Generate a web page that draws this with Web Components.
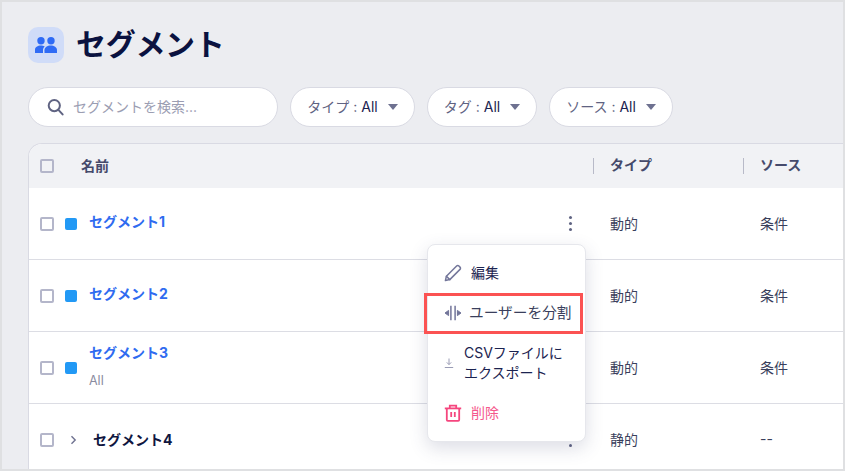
<!DOCTYPE html>
<html lang="ja">
<head>
<meta charset="utf-8">
<title>セグメント</title>
<style>
  html, body { margin: 0; height: 100%; }
  body {
    width: 845px;
    height: 471px;
    overflow: hidden;
    font-family: Inter, "Noto Sans CJK JP", sans-serif;
  }
</style>
</head>
<body>
<segment-page>
  <page-title slot="title">セグメント</page-title>
  <search-box slot="tools" placeholder="セグメントを検索..."></search-box>
  <filter-pill slot="tools" label="タイプ" value="All" style="width:125px"></filter-pill>
  <filter-pill slot="tools" label="タグ" value="All" style="width:110px"></filter-pill>
  <filter-pill slot="tools" label="ソース" value="All" style="width:124px"></filter-pill>
  <segment-table slot="table">
    <segment-row name="セグメント1" type="動的" source="条件"></segment-row>
    <segment-row name="セグメント2" type="動的" source="条件"></segment-row>
    <segment-row name="セグメント3" sub="All" type="動的" source="条件"></segment-row>
    <segment-row name="セグメント4" type="静的" source="--" folder></segment-row>
  </segment-table>
  <action-menu slot="menu">
    <menu-row icon="edit" gap="9">編集</menu-row>
    <menu-row icon="split" gap="7" highlight>ユーザーを分割</menu-row>
    <menu-row icon="download" gap="10" tall>CSVファイルに<br>エクスポート</menu-row>
    <menu-row icon="trash" gap="9" danger>削除</menu-row>
  </action-menu>
</segment-page>

<script>
const ICONS = {
  edit: `<svg width="18" height="18" viewBox="0 0 18 18" fill="none" stroke="#73769a" stroke-width="1.5" stroke-linejoin="round" stroke-linecap="round"><path d="M1.4 16.6l1-4.4L12.6 2a1.6 1.6 0 0 1 2.3 0l1.1 1.1a1.6 1.6 0 0 1 0 2.3L5.8 15.6z"/><path d="M2.4 12.2l3.4 3.4"/></svg>`,
  split: `<svg width="18" height="18" viewBox="0 0 18 18" fill="none" stroke="#73769a" stroke-width="1.5"><path d="M6.9 1.8v14.4M11.1 1.8v14.4"/><path d="M4.800 9H2M13.200 9H16"/><path d="M4.600 6.400L1 9l3.600 2.600zM13.400 6.400L17 9l-3.600 2.600z" fill="#73769a" stroke-width="1" stroke-linejoin="round"/></svg>`,
  download: `<svg width="10" height="12" viewBox="0 0 10 12" fill="none" stroke="#9a9cb5" stroke-width="1"><path d="M5 1.500v6M2.800 5.400L5 7.600l2.200-2.200"/><path d="M.8 10.500h8.400"/></svg>`,
  trash: `<svg width="18" height="18" viewBox="0 0 18 18" fill="none" stroke="#f5467e" stroke-width="1.8"><path d="M.8 4.400h16.400"/><path d="M5.800 4.200V1.700h6.400v2.500"/><path d="M2.800 4.400v11.400c0 .6.4 1 1 1h10.400c.6 0 1-.4 1-1V4.400"/><path d="M7.200 8v5M10.800 8v5"/></svg>`
};

class SegmentPage extends HTMLElement {
  constructor() {
    super();
    this.attachShadow({ mode: 'open' });
    this.shadowRoot.innerHTML = `
      <style>
        :host {
          display: block;
          position: relative;
          box-sizing: border-box;
          width: 845px;
          height: 471px;
          border: 2px solid #dfe0e2;
          background: #ecedf1;
          overflow: hidden;
        }
        .inner {
          display: flex;
          flex-direction: column;
          padding: 25px 0 0 26px;
        }
        .tools {
          display: flex;
          gap: 12px;
          margin-top: 24px;
        }
        .table { margin-top: 16px; }
      </style>
      <div class="inner">
        <slot name="title"></slot>
        <div class="tools"><slot name="tools"></slot></div>
        <div class="table"><slot name="table"></slot></div>
      </div>
      <slot name="menu"></slot>
    `;
  }
}

class PageTitle extends HTMLElement {
  constructor() {
    super();
    this.attachShadow({ mode: 'open' });
    this.shadowRoot.innerHTML = `
      <style>
        :host { display: flex; align-items: center; gap: 12px; height: 36px; }
        .icon {
          width: 36px;
          height: 36px;
          border-radius: 10px;
          background: #d0dcf8;
          display: flex;
          align-items: center;
          justify-content: center;
        }
        h1 {
          margin: -2px 0 0;
          font-size: 30px;
          line-height: 36px;
          letter-spacing: -0.3px;
          font-weight: 700;
          color: #0a1240;
        }
      </style>
      <div class="icon">
        <svg width="22" height="16" viewBox="0 0 22 16" fill="#2f6bf5">
          <circle cx="6" cy="3.7" r="3.7"/>
          <circle cx="16" cy="3.7" r="3.7"/>
          <path d="M0 16v-3.200C0 10.200 2.600 8.600 5.800 8.600c1.500 0 2.900.3 3.900 1-1.100 1-1.700 2.200-1.700 3.600V16z"/>
          <path d="M9.500 16v-2.800c0-2.800 2.800-4.600 6.200-4.600S22 10.400 22 13.200V16z"/>
        </svg>
      </div>
      <h1><slot></slot></h1>
    `;
  }
}

class SearchBox extends HTMLElement {
  constructor() {
    super();
    this.attachShadow({ mode: 'open' });
  }
  connectedCallback() {
    const placeholder = this.getAttribute('placeholder') || '';
    this.shadowRoot.innerHTML = `
      <style>
        :host {
          display: flex;
          align-items: center;
          box-sizing: border-box;
          width: 250px;
          height: 40px;
          padding-left: 18px;
          gap: 9px;
          background: #fff;
          border: 1px solid #d9dae3;
          border-radius: 20px;
        }
        span { font-size: 14px; color: #9b9db2; margin-top: -2px; }
        svg { flex: none; }
      </style>
      <svg width="17" height="18" viewBox="0 0 17 18" fill="none" stroke="#5f6382" stroke-width="2">
        <circle cx="7.3" cy="7.6" r="5.6"/>
        <path d="M11.4 11.8l4.2 4.6" stroke-linecap="round"/>
      </svg>
      <span>${placeholder}</span>
    `;
  }
}

class FilterPill extends HTMLElement {
  constructor() {
    super();
    this.attachShadow({ mode: 'open' });
  }
  connectedCallback() {
    this.shadowRoot.innerHTML = `
      <style>
        :host {
          display: flex;
          align-items: center;
          justify-content: center;
          box-sizing: border-box;
          height: 40px;
          gap: 10px;
          background: #fff;
          border: 1px solid #d9dae3;
          border-radius: 20px;
          font-size: 14px;
          white-space: nowrap;
        }
        .text { margin-top: -2px; }
        .label { color: #5f6382; }
        .value { color: #1b2350; }
        .arrow {
          width: 0;
          height: 0;
          border-left: 5px solid transparent;
          border-right: 5px solid transparent;
          border-top: 6px solid #6e7190;
        }
      </style>
      <span class="text"><span class="label">${this.getAttribute('label')} :</span> <span class="value">${this.getAttribute('value')}</span></span>
      <span class="arrow"></span>
    `;
  }
}

class SegmentTable extends HTMLElement {
  constructor() {
    super();
    this.attachShadow({ mode: 'open' });
    this.shadowRoot.innerHTML = `
      <style>
        :host {
          display: block;
          width: 860px;
          background: #fff;
          border: 1px solid #d9dae3;
          border-bottom: 0;
          border-radius: 14px 0 0 0;
          overflow: hidden;
        }
        .head {
          display: grid;
          grid-template-columns: 564px 150px 1fr;
          align-items: center;
          height: 44px;
          background: #f1f2f5;
          font-size: 14px;
          font-weight: 700;
          color: #454a6b;
        }
        .name { display: flex; align-items: center; padding-left: 11px; }
        .name span:last-child { margin-top: -2px; }
        .box {
          width: 14px;
          height: 14px;
          border: 2px solid #b4b6ca;
          border-radius: 2px;
          box-sizing: border-box;
          margin-right: 27px;
        }
        .col {
          height: 16px;
          line-height: 14px;
          padding-left: 16px;
          border-left: 1px solid #b8bac8;
        }
      </style>
      <div class="head">
        <div class="name"><span class="box"></span><span>名前</span></div>
        <div class="col">タイプ</div>
        <div class="col">ソース</div>
      </div>
      <slot></slot>
    `;
  }
}

class SegmentRow extends HTMLElement {
  constructor() {
    super();
    this.attachShadow({ mode: 'open' });
  }
  connectedCallback() {
    const folder = this.hasAttribute('folder');
    const sub = this.getAttribute('sub');
    this.shadowRoot.innerHTML = `
      <style>
        :host {
          display: grid;
          grid-template-columns: 564px 150px 1fr;
          align-items: center;
          height: 71px;
          border-bottom: 1px solid #dcdde4;
          font-size: 14px;
          color: #3a3f5c;
        }
        .name { display: flex; align-items: center; padding-left: 11px; position: relative; }
        .box {
          flex: none;
          width: 14px;
          height: 14px;
          border: 2px solid #b4b6ca;
          border-radius: 2px;
          box-sizing: border-box;
        }
        .swatch {
          flex: none;
          width: 12px;
          height: 12px;
          margin-left: 11px;
          border-radius: 2px;
          background: #2299f5;
        }
        .chevron { flex: none; margin-left: 16px; }
        .text { display: flex; flex-direction: column; margin: 0 0 4px 12px; }
        .text.two { margin-bottom: 3px; }
        .title { font-weight: 700; color: #2f6bf0; line-height: 20px; }
        .folder .text { margin-bottom: 0; }
        .folder .title { color: #0f1640; margin-left: 4px; }
        .sub { font-size: 12.5px; color: #8a8ca0; line-height: 16px; margin-top: 10px; }
        .dots {
          position: absolute;
          left: 540px;
          display: flex;
          flex-direction: column;
          gap: 3px;
        }
        .dots i { width: 3px; height: 3px; border-radius: 50%; background: #5f6382; }
        .cell { padding: 0 0 2px 17px; }
      </style>
      <div class="name ${folder ? 'folder' : ''}">
        <span class="box"></span>
        ${folder
          ? `<svg class="chevron" width="7" height="10" viewBox="0 0 7 10" fill="none" stroke="#6e7190" stroke-width="1.4"><path d="M1.5 1.2L5.2 5 1.5 8.8"/></svg>`
          : `<span class="swatch"></span>`}
        <div class="text ${sub ? 'two' : ''}">
          <span class="title">${this.getAttribute('name')}</span>
          ${sub ? `<span class="sub">${sub}</span>` : ''}
        </div>
        <div class="dots"><i></i><i></i><i></i></div>
      </div>
      <div class="cell">${this.getAttribute('type')}</div>
      <div class="cell">${this.getAttribute('source')}</div>
    `;
  }
}

class ActionMenu extends HTMLElement {
  constructor() {
    super();
    this.attachShadow({ mode: 'open' });
    this.shadowRoot.innerHTML = `
      <style>
        :host {
          position: absolute;
          left: 424.5px;
          top: 242px;
          width: 159.5px;
          height: 198px;
          box-sizing: border-box;
          padding-top: 8px;
          display: flex;
          flex-direction: column;
          background: #fff;
          border: 1px solid #e6e7ec;
          border-radius: 8px;
          box-shadow: 0 6px 18px rgba(60, 65, 110, 0.18);
        }
      </style>
      <slot></slot>
    `;
  }
}

class MenuRow extends HTMLElement {
  constructor() {
    super();
    this.attachShadow({ mode: 'open' });
  }
  connectedCallback() {
    const icon = this.getAttribute('icon');
    const gap = this.getAttribute('gap');
    this.shadowRoot.innerHTML = `
      <style>
        :host {
          display: flex;
          align-items: center;
          position: relative;
          box-sizing: border-box;
          height: 40px;
          padding-left: 16.5px;
          font-size: 14px;
          line-height: 20px;
          color: #1b2350;
        }
        :host([tall]) { height: 60px; }
        :host([danger]) { color: #f5588c; }
        :host([highlight]) { color: #3a3f5c; font-size: 14.7px; }
        :host([highlight])::after {
          content: "";
          position: absolute;
          left: -3.5px;
          top: 0;
          width: 159px;
          height: 41px;
          box-sizing: border-box;
          border: 3.5px solid #fb5252;
          pointer-events: none;
        }
        .icon { display: flex; flex: none; margin-right: ${gap}px; }
      </style>
      <span class="icon">${ICONS[icon]}</span>
      <span><slot></slot></span>
    `;
  }
}

customElements.define('segment-page', SegmentPage);
customElements.define('page-title', PageTitle);
customElements.define('search-box', SearchBox);
customElements.define('filter-pill', FilterPill);
customElements.define('segment-table', SegmentTable);
customElements.define('segment-row', SegmentRow);
customElements.define('action-menu', ActionMenu);
customElements.define('menu-row', MenuRow);
</script>
</body>
</html>
